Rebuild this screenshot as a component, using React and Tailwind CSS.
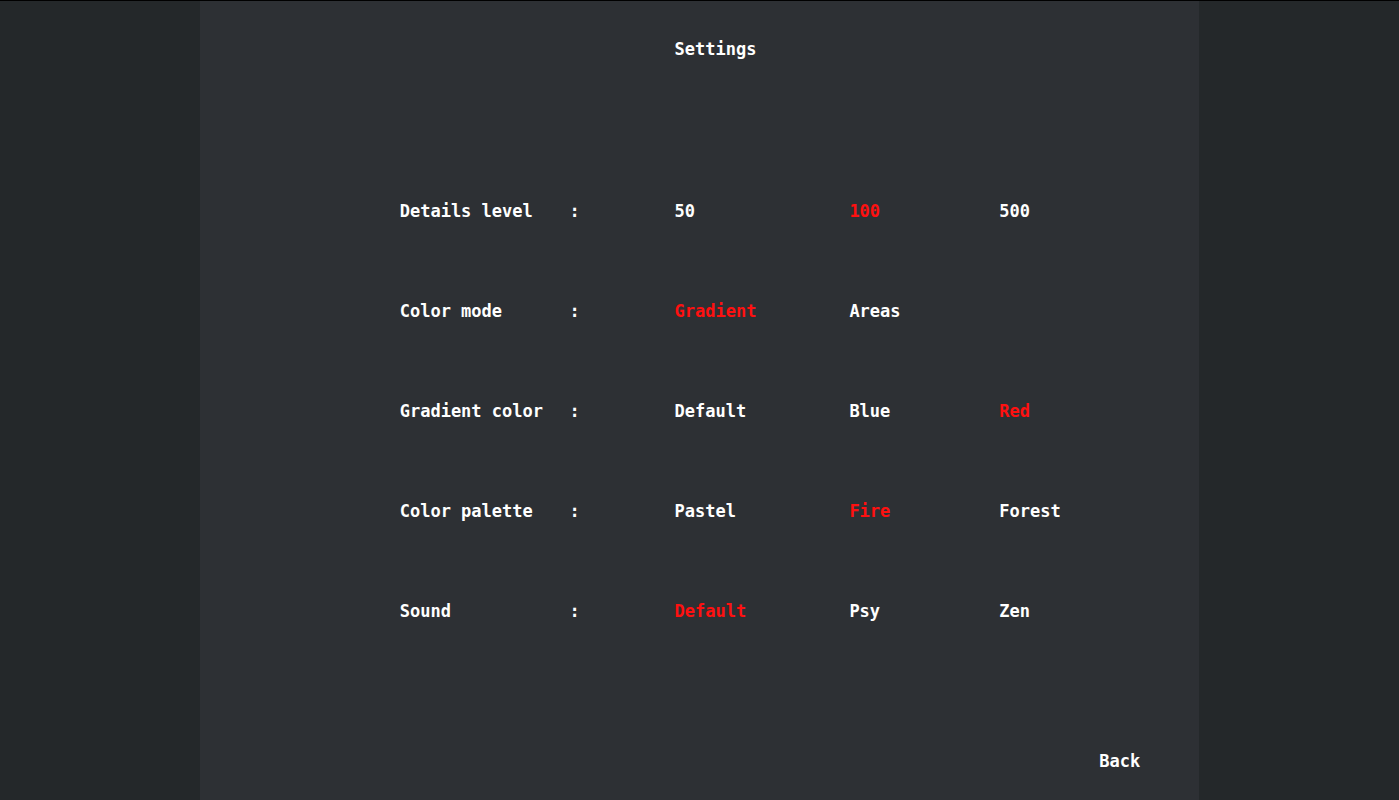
import { useState } from 'react';

const SETTINGS = [
  { label: 'Details level', options: ['50', '100', '500'], initial: '100' },
  { label: 'Color mode', options: ['Gradient', 'Areas'], initial: 'Gradient' },
  { label: 'Gradient color', options: ['Default', 'Blue', 'Red'], initial: 'Red' },
  { label: 'Color palette', options: ['Pastel', 'Fire', 'Forest'], initial: 'Fire' },
  { label: 'Sound', options: ['Default', 'Psy', 'Zen'], initial: 'Default' },
];

const COLUMNS = 'grid grid-cols-[170fr_105fr_175fr_150fr_200fr] pl-[20%]';

function SettingRow({ label, options, initial }) {
  const [selected, setSelected] = useState(initial);
  return (
    <div role="group" aria-label={label} className={`${COLUMNS} h-6 items-center`}>
      <span>{label}</span>
      <span>:</span>
      {options.map((option) => (
        <button
          key={option}
          type="button"
          aria-pressed={option === selected}
          onClick={() => setSelected(option)}
          className={`justify-self-start cursor-pointer ${option === selected ? 'text-[#ff1010]' : 'text-white'}`}
        >
          {option}
        </button>
      ))}
    </div>
  );
}

export default function App() {
  return (
    <div className="flex min-h-screen justify-center border-t border-black bg-[#24282a] text-[17px] leading-6 font-bold whitespace-nowrap text-white font-['DejaVu_Sans_Mono','Liberation_Mono',monospace]">
      <main className="flex w-5/7 flex-col bg-[#2d3034] pt-9 pb-[27px]">
        <header className={COLUMNS}>
          <h1 className="col-start-3">Settings</h1>
        </header>
        <section className="mt-[138px] flex flex-col gap-[76px]">
          {SETTINGS.map((setting) => (
            <SettingRow key={setting.label} {...setting} />
          ))}
        </section>
        <footer className="mt-auto flex pl-[90%]">
          <button type="button" className="cursor-pointer">Back</button>
        </footer>
      </main>
    </div>
  );
}
